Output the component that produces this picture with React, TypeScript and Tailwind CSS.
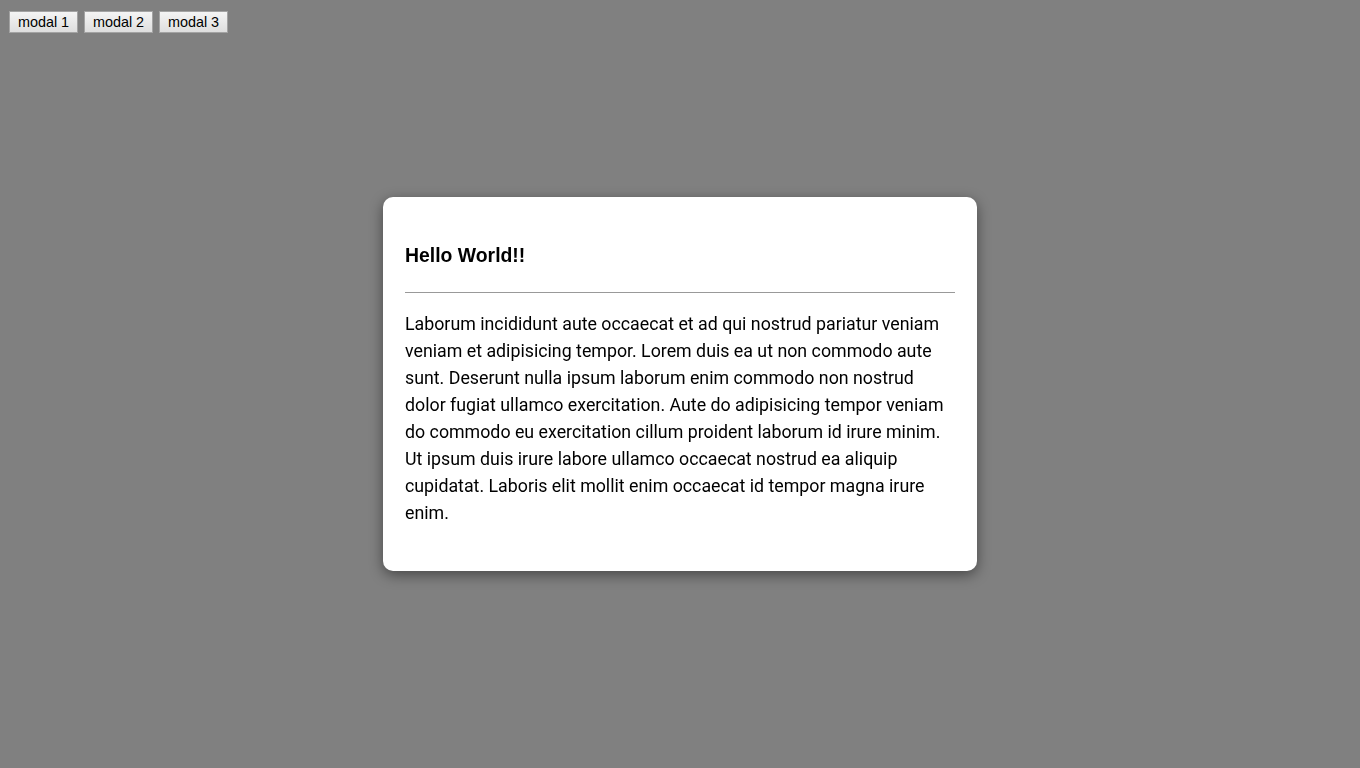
const text =
  'Laborum incididunt aute occaecat et ad qui nostrud pariatur veniam veniam et adipisicing tempor. Lorem duis ea ut non commodo aute sunt. Deserunt nulla ipsum laborum enim commodo non nostrud dolor fugiat ullamco exercitation. Aute do adipisicing tempor veniam do commodo eu exercitation cillum proident laborum id irure minim. Ut ipsum duis irure labore ullamco occaecat nostrud ea aliquip cupidatat. Laboris elit mollit enim occaecat id tempor magna irure enim.'

const App = () => {
    return (
        <div className="min-h-screen w-full bg-[#808080] font-['Roboto',sans-serif]">
            <div className="flex gap-[6px] pl-[9px] pt-[11px]">
                {['modal 1', 'modal 2', 'modal 3'].map((label) => (
                    <button
                        key={label}
                        className="h-[22px] w-[69px] border border-[#a3a3a3] bg-gradient-to-b from-[#f4f4f4] to-[#dedede] text-[14.4px] text-black font-['Liberation_Sans',Arial,sans-serif] leading-none"
                    >
                        {label}
                    </button>
                ))}
            </div>
            <div className="fixed inset-0 flex items-center justify-center">
                <div className="w-[594px] rounded-[10px] bg-white p-[22px] shadow-[0_4px_14px_rgba(0,0,0,0.45)]">
                    <h2 className="mt-[24px] text-[19.4px] font-bold leading-[24px] text-black font-['Liberation_Sans',Arial,sans-serif]">Hello World!!</h2>
                    <div className="mt-[25px] h-px bg-[#999999]" />
                    <p className="mt-[17px] mb-[23px] text-[17.8px] leading-[27px] text-black">{text}</p>
                </div>
            </div>
        </div>
    )
}

export default App
